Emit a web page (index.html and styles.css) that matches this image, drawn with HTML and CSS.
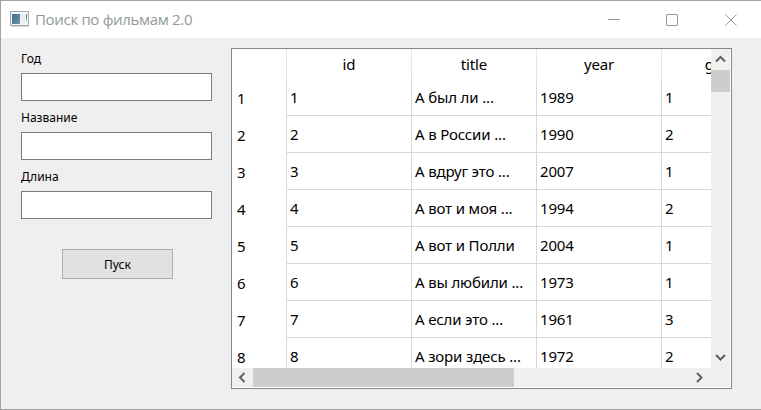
FILE: index.html
```html
<!DOCTYPE html>
<html lang="ru">
<head>
<meta charset="utf-8">
<title>Поиск по фильмам 2.0</title>
<link rel="stylesheet" href="styles.css">
</head>
<body>
<div class="window">
  <header class="titlebar">
    <svg class="app-icon" width="19" height="16" viewBox="0 0 19 16">
      <defs><linearGradient id="g" x1="0" y1="0" x2="1" y2="1"><stop offset="0" stop-color="#3f7296"/><stop offset=".55" stop-color="#56819c"/><stop offset="1" stop-color="#74919f"/></linearGradient></defs>
      <rect x=".5" y=".5" width="18" height="14" fill="#f5f6f6" stroke="#a3a8a8"/>
      <path d="M1 15.500H19" stroke="#d5d8d8"/>
      <rect x="2" y="3" width="8" height="10" fill="url(#g)"/>
      <path d="M11 3h4v9h-4z" fill="#e9ebec"/>
      <path d="M16.500 3v5" stroke="#5d899f"/><path d="M16.500 8v2" stroke="#a8cbb8"/>
    </svg>
    <h1 class="title">Поиск по фильмам 2.0</h1>
    <svg class="controls" width="153" height="14" viewBox="0 0 153 14" fill="none" stroke="#999">
      <path d="M0 6.500h12M58.500 1.500h11v11h-11z"/><path d="M117.500 1.500l11 11M128.500 1.500l-11 11"/>
    </svg>
  </header>
  <main class="content">
    <form class="form">
      <label class="label" for="y">Год</label><input class="field" id="y">
      <label class="label" for="n">Название</label><input class="field" id="n">
      <label class="label" for="d">Длина</label><input class="field" id="d">
      <button class="run" type="button">Пуск</button>
    </form>
    <section class="table">
      <div class="view">
        <div class="row head"><span class="num"></span><span class="cell">id</span><span class="cell">title</span><span class="cell">year</span><span class="cell">genre</span></div>
        <div class="row"><span class="num">1</span><span class="cell">1</span><span class="cell">А был ли ...</span><span class="cell">1989</span><span class="cell">1</span></div>
        <div class="row"><span class="num">2</span><span class="cell">2</span><span class="cell">А в России ...</span><span class="cell">1990</span><span class="cell">2</span></div>
        <div class="row"><span class="num">3</span><span class="cell">3</span><span class="cell">А вдруг это ...</span><span class="cell">2007</span><span class="cell">1</span></div>
        <div class="row"><span class="num">4</span><span class="cell">4</span><span class="cell">А вот и моя ...</span><span class="cell">1994</span><span class="cell">2</span></div>
        <div class="row"><span class="num">5</span><span class="cell">5</span><span class="cell">А вот и Полли</span><span class="cell">2004</span><span class="cell">1</span></div>
        <div class="row"><span class="num">6</span><span class="cell">6</span><span class="cell">А вы любили ...</span><span class="cell">1973</span><span class="cell">1</span></div>
        <div class="row"><span class="num">7</span><span class="cell">7</span><span class="cell">А если это ...</span><span class="cell">1961</span><span class="cell">3</span></div>
        <div class="row"><span class="num">8</span><span class="cell">8</span><span class="cell">А зори здесь ...</span><span class="cell">1972</span><span class="cell">2</span></div>
      </div>
      <div class="vbar">
        <svg class="arrow" width="19" height="21" viewBox="0 0 19 21"><path d="M5 12.500l4.500-4.500l4.500 4.500"/></svg>
        <div class="vthumb"></div>
        <svg class="arrow down" width="19" height="21" viewBox="0 0 19 21"><path d="M5 8l4.500 4.500l4.500-4.500"/></svg>
      </div>
      <div class="hbar">
        <svg class="arrow" width="21" height="19" viewBox="0 0 21 19"><path d="M12.500 5l-4.500 4.500l4.500 4.500"/></svg>
        <div class="hthumb"></div>
        <svg class="arrow right" width="21" height="19" viewBox="0 0 21 19"><path d="M7 5l4.500 4.500l-4.500 4.500"/></svg>
      </div>
      <div class="corner"></div>
    </section>
  </main>
</div>
</body>
</html>
```
FILE: styles.css
```css
* { box-sizing: border-box; }
body { margin: 0; font-family: "Noto Sans", sans-serif; color: #000; overflow: hidden; }
.window { width: 761px; height: 410px; border: 1px solid #a3a3a3; border-right: 0; background: #efefef; }
.titlebar { display: flex; align-items: center; height: 37px; padding-left: 9px; background: #fff; }
.app-icon { margin-top: -1px; }
.title { margin: -2px 0 0 6px; font-size: 15px; font-weight: 400; line-height: 20px; letter-spacing: -0.32px; color: #929999; font-family: "Open Sans", sans-serif; white-space: nowrap; }
.controls { margin-left: auto; }
.content { display: flex; padding: 10px 0 0 20px; }
.form { display: flex; flex-direction: column; width: 191px; margin-right: 19px; }
.label { height: 25px; padding-top: 3px; font-size: 12px; line-height: 16px; }
.field { width: 191px; height: 28px; margin: 0 0 6px; border: 1px solid #7a7a7a; background: #fff; }
.run { width: 111px; height: 30px; margin: 24px 0 0 41px; padding: 0; border: 1px solid #adadad; background: #e1e1e1; color: #000; font: 12px "Noto Sans", sans-serif; }
.table { display: grid; grid-template-columns: 479px 20px; grid-template-rows: 319px 20px; width: 501px; height: 341px; border: 1px solid #828790; background: #fff; }
.view { overflow: hidden; font-size: 15px; letter-spacing: -0.15px; }
.row { display: grid; grid-template-columns: 54px repeat(4, 125px); height: 37px; line-height: 36px; white-space: nowrap; }
.head { height: 30px; line-height: 31px; text-align: center; }
.num { padding: 1px 0 0 5px; }
.cell { padding-left: 3px; border-left: 1px solid #d8d8d8; border-bottom: 1px solid #d8d8d8; }
.head .cell { padding: 0; border-left-color: #e5e5e5; border-bottom: 0; }
.head .cell:last-child { padding-left: 2px; }
.vbar { display: flex; flex-direction: column; width: 19px; background: #f0f0f0; }
.vthumb { height: 22px; background: #cdcdcd; }
.down { margin-top: auto; }
.hbar { display: flex; height: 19px; background: #f0f0f0; }
.hthumb { width: 261px; background: #cdcdcd; }
.right { margin-left: auto; }
.corner { width: 19px; height: 19px; background: #f0f0f0; }
.arrow { fill: none; stroke: #606060; stroke-width: 2; }
```
